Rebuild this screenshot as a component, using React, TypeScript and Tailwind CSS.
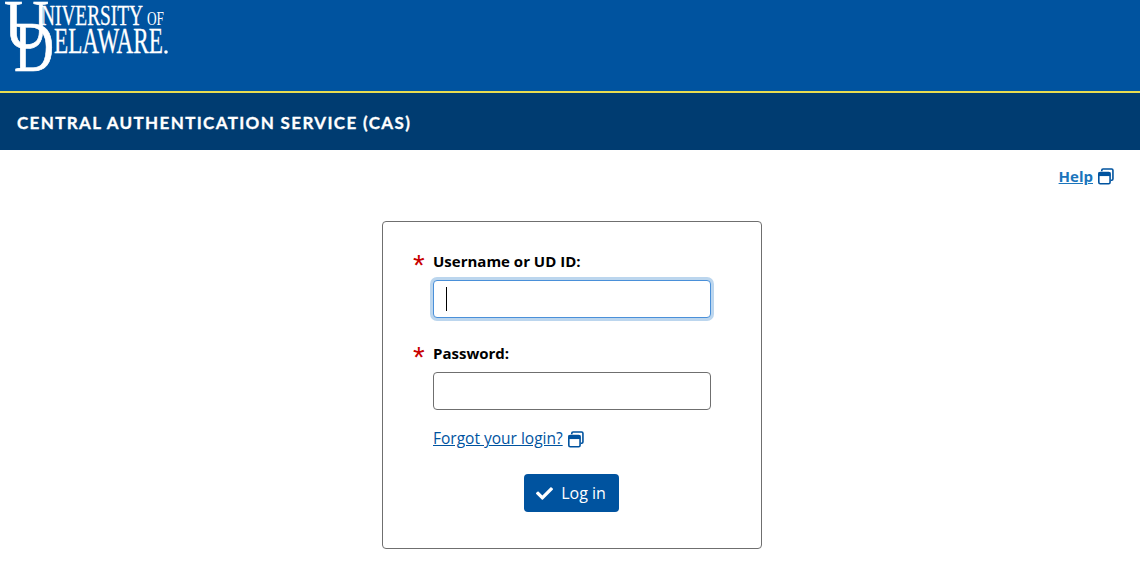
import React from 'react';
import { FaCheck } from 'react-icons/fa';

const serif = { fontFamily: '"Liberation Serif", serif' };

function UdLogo() {
  return (
    <svg width="180" height="80" viewBox="0 0 180 80" fill="#fff" style={serif}>
      <text x="4" y="48" fontSize="70" textLength="45" lengthAdjust="spacingAndGlyphs" stroke="#fff" strokeWidth="0.7">U</text>
      <text x="14" y="71" fontSize="72" textLength="40" lengthAdjust="spacingAndGlyphs" stroke="#fff" strokeWidth="0.7">D</text>
      <text x="41" y="25" fontSize="30" textLength="102" lengthAdjust="spacingAndGlyphs" stroke="#fff" strokeWidth="0.3">NIVERSITY</text>
      <text x="147" y="25" fontSize="18" textLength="17" lengthAdjust="spacingAndGlyphs">OF</text>
      <text x="54" y="53" fontSize="35" textLength="109" lengthAdjust="spacingAndGlyphs" stroke="#fff" strokeWidth="0.3">ELAWARE</text>
      <circle cx="166" cy="52" r="1.8" />
    </svg>
  );
}

function NewWindowIcon() {
  return (
    <svg width="17" height="17" viewBox="0 0 16 16" fill="none" className="shrink-0">
      <path d="M4.5 3V2.2C4.5 1.5 5 1 5.7 1h8.1c.7 0 1.2.5 1.2 1.2v8.1c0 .7-.5 1.2-1.2 1.2H13" stroke="#00539f" strokeWidth="1.5" />
      <rect x="1.7" y="4.2" width="10.6" height="10.6" rx="1.3" stroke="#00539f" strokeWidth="1.5" />
      <rect x="1.5" y="4" width="11" height="3.6" fill="#00539f" />
    </svg>
  );
}

function Field({ label, focused }: { label: string; focused?: boolean }) {
  return (
    <div>
      <div className="flex h-[22px] items-center">
        <span className="h-[22px] w-[21px] pl-[1px] text-[30px] leading-none text-[#c80000]" style={{ fontFamily: '"Liberation Sans", sans-serif' }}>*</span>
        <label className="text-[15px] font-bold text-black">{label}</label>
      </div>
      {focused ? (
        <div className="ml-[21px] mt-[8px] flex h-[38px] w-[278px] items-center rounded-[4px] border border-[#4a90d9] bg-white pl-3 shadow-[0_0_0_3px_#bcd6ee]">
          <div className="h-[24px] w-px bg-black" />
        </div>
      ) : (
        <div className="ml-[21px] mt-[8px] h-[38px] w-[278px] rounded-[4px] border border-[#6f6f6f] bg-white" />
      )}
    </div>
  );
}

export default function App() {
  return (
    <div className="h-[571px] overflow-hidden bg-white" style={{ fontFamily: '"Open Sans", sans-serif' }}>
      <header>
        <div className="h-[91px] overflow-hidden bg-[#00539f]">
          <UdLogo />
        </div>
        <div className="h-[2px] bg-[#e8dc50]" />
        <div className="flex h-[57px] items-center bg-[#003c71] pl-[17px]">
          <h1 className="pt-[2px] text-[17px] font-bold tracking-[1.35px] text-white [-webkit-text-stroke:0.3px_white]" style={{ fontFamily: 'Lato, sans-serif' }}>
            CENTRAL AUTHENTICATION SERVICE (CAS)
          </h1>
        </div>
      </header>

      <div className="flex h-[71px] items-start justify-end pr-[26px] pt-[16px]">
        <a className="flex h-[20px] items-center gap-[4px] text-[15px] font-bold text-[#1b75bc] underline">
          Help <NewWindowIcon />
        </a>
      </div>

      <div className="flex justify-center pl-1">
        <div className="h-[328px] w-[380px] rounded-[4px] border border-[#6f6f6f] px-[29px] pt-[28px]">
          <Field label="Username or UD ID:" focused />
          <div className="mt-[24px]">
            <Field label="Password:" />
          </div>
          <div className="ml-[21px] mt-[18px] flex h-[22px] items-center gap-[4px] text-[15.5px] text-[#00539f]">
            <a className="underline">Forgot your login?</a>
            <NewWindowIcon />
          </div>
          <div className="mt-[24px] flex justify-center pr-[2px]">
            <button className="flex h-[38px] w-[95px] items-center justify-center gap-[8px] rounded-[4px] bg-[#00539f] text-[16px] text-white">
              <FaCheck className="text-[17px]" /> Log in
            </button>
          </div>
        </div>
      </div>
    </div>
  );
}
